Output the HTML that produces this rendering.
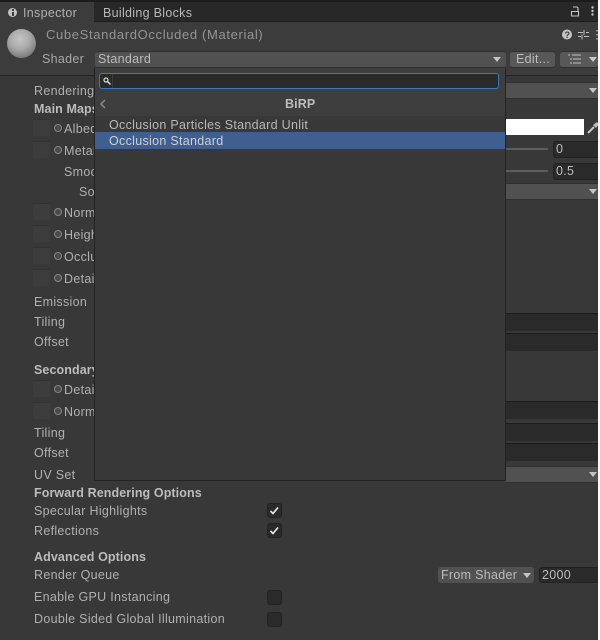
<!DOCTYPE html>
<html><head><meta charset="utf-8"><style>
html,body{margin:0;padding:0;background:#fff}
#r{position:relative;width:598px;height:640px;overflow:hidden;background:#383838;font-family:"Liberation Sans",sans-serif;font-size:12.5px;color:#b0b0b0;letter-spacing:.3px}
#r div{position:absolute;box-sizing:border-box}
.t{white-space:nowrap;line-height:14px;height:14px}
.b{font-weight:bold;color:#bcbcbc;letter-spacing:.1px}
.tx{width:17px;height:17px;background:#3c3c3c;border-top:1px solid #323232;left:33px}
.dot{width:8px;height:8px;border:1.5px solid #858585;border-radius:50%;left:54px;background:#4a4a4a}
.f{left:505px;width:95px;background:#2a2a2a;border-top:1px solid #1c1c1c}
.dd{background:#515151;border-top:1px solid #303030;border-bottom:1px solid #303030}
.ar{width:0;height:0;border-left:4px solid transparent;border-right:4px solid transparent;border-top:5px solid #c4c4c4}
.cb{left:267px;width:15px;height:15px;background:#2a2a2a;border:1px solid #232323;border-radius:3px}
.num{background:#2a2a2a;border:1px solid #212121;border-radius:3px;color:#bcbcbc;padding-left:2px;line-height:15px;height:17px}
</style></head><body><div id="r">
<div style="left:0;top:0;width:600px;height:22px;background:#282828;border-top:2px solid #1c1c1c;border-bottom:1px solid #1d1d1d"></div>
<div style="left:0;top:2px;width:94px;height:20px;background:#3c3c3c"></div>
<div style="left:8px;top:8px;width:9px;height:9px;border-radius:50%;background:#c2c2c2"></div>
<div style="left:11.5px;top:9px;width:2px;height:1.5px;background:#3c3c3c"></div>
<div style="left:11.5px;top:11.5px;width:2px;height:4px;background:#3c3c3c"></div>
<div class="t" style="left:23px;top:6px">Inspector</div>
<div class="t" style="left:103px;top:6px;color:#b8b8b8">Building Blocks</div>
<svg style="position:absolute;left:570px;top:5px" width="26" height="12" viewBox="0 0 26 12"><path d="M1.500 6.500h7v4.500h-7zM3 2h3.500q1.500 0 1.500 1.500V6.500" fill="none" stroke="#c4c4c4" stroke-width="1.100"/><circle cx="22.500" cy="2.500" r="1.200" fill="#c4c4c4"/><circle cx="22.500" cy="6" r="1.200" fill="#c4c4c4"/><circle cx="22.500" cy="9.500" r="1.200" fill="#c4c4c4"/></svg>

<div style="left:0;top:22px;width:600px;height:54px;background:#3c3c3c;border-bottom:1px solid #232323"></div>
<div style="left:7px;top:29px;width:29px;height:29px;border-radius:50%;background:radial-gradient(circle at 45% 35%,#c6c6c6 0,#aaa 40%,#7c7c7c 75%,#4c4c4c 100%)"></div>
<div class="t" style="left:46px;top:28px;font-size:13px;color:#959595;letter-spacing:.65px">CubeStandardOccluded (Material)</div>
<div class="t" style="left:42px;top:52px;color:#a8a8a8">Shader</div>
<div class="dd" style="left:95px;top:51px;width:411px;height:17px;border-radius:3px"></div>
<div class="t" style="left:98px;top:52px;color:#bcbcbc">Standard</div>
<div class="ar" style="left:493px;top:57px"></div>
<div class="dd" style="left:510px;top:51px;width:45px;height:17px;border-radius:3px;background:#585858"></div>
<div class="t" style="left:516px;top:52px;color:#bcbcbc">Edit...</div>
<div class="dd" style="left:560px;top:51px;width:38px;height:17px;border-radius:3px;background:#585858"></div>
<svg style="position:absolute;left:568px;top:54px" width="30" height="10" viewBox="0 0 30 10"><path d="M0 1h2M4 1h9M2 5h2M5 5h8M2 9h2M5 9h8" stroke="#c0c0c0" fill="none"/><path d="M21 3h8l-4 5z" fill="#c8c8c8"/></svg>
<svg style="position:absolute;left:561px;top:28px" width="37" height="13" viewBox="0 0 37 13"><circle cx="6" cy="6.500" r="5" fill="#c4c4c4"/><text x="3.500" y="10" font-family="Liberation Sans" font-size="9" font-weight="bold" fill="#3c3c3c">?</text><path d="M17 4.500h5M25 4.500h3M17 8.500h3M23 8.500h5M23 2v5M21 6.500v5" stroke="#c0c0c0" fill="none"/><path d="M36 2v1.500M36 6v1.500M36 10v1.500" stroke="#aaa" stroke-width="1.500"/></svg>

<div class="t" style="left:34px;top:84px">Rendering Mode</div>
<div class="dd" style="left:505px;top:82px;width:95px;height:17px"></div>
<div class="ar" style="left:589px;top:88px"></div>
<div class="t b" style="left:34px;top:102px">Main Maps</div>

<div class="tx" style="top:119px"></div><div class="dot" style="top:124px"></div><div class="t" style="left:64px;top:122px">Albedo</div>
<div class="tx" style="top:141px"></div><div class="dot" style="top:146px"></div><div class="t" style="left:64px;top:144px">Metallic</div>
<div class="t" style="left:64px;top:165px">Smoothness</div>
<div class="t" style="left:79px;top:185px">Source</div>
<div class="tx" style="top:203px"></div><div class="dot" style="top:208px"></div><div class="t" style="left:64px;top:206px">Normal Map</div>
<div class="tx" style="top:225px"></div><div class="dot" style="top:230px"></div><div class="t" style="left:64px;top:228px">Height Map</div>
<div class="tx" style="top:247px"></div><div class="dot" style="top:252px"></div><div class="t" style="left:64px;top:250px">Occlusion</div>
<div class="tx" style="top:269px"></div><div class="dot" style="top:274px"></div><div class="t" style="left:64px;top:272px">Detail Mask</div>
<div class="t" style="left:34px;top:295px">Emission</div>
<div class="t" style="left:34px;top:315px">Tiling</div>
<div class="t" style="left:34px;top:335px">Offset</div>
<div class="t b" style="left:34px;top:363px">Secondary Maps</div>
<div class="tx" style="top:380px"></div><div class="dot" style="top:385px"></div><div class="t" style="left:64px;top:383px">Detail Albedo</div>
<div class="tx" style="top:402px"></div><div class="dot" style="top:407px"></div><div class="t" style="left:64px;top:405px">Normal Map</div>
<div class="t" style="left:34px;top:426px">Tiling</div>
<div class="t" style="left:34px;top:446px">Offset</div>
<div class="t" style="left:34px;top:468px">UV Set</div>

<div style="left:505px;top:119px;width:79px;height:16px;background:#fff"></div>
<svg style="position:absolute;left:587px;top:120px" width="11" height="14" viewBox="0 0 11 14"><path d="M1 13l6-6" stroke="#c8c8c8" stroke-width="2"/><path d="M6 5l3 3 3-4-2-2z" fill="#bbb"/></svg>
<div style="left:505px;top:148px;width:43px;height:2px;background:#5e5e5e"></div>
<div class="num" style="left:553px;top:141px;width:47px">0</div>
<div style="left:505px;top:170px;width:43px;height:2px;background:#5e5e5e"></div>
<div class="num" style="left:553px;top:163px;width:47px">0.5</div>
<div class="dd" style="left:505px;top:183px;width:95px;height:17px"></div>
<div class="ar" style="left:589px;top:189px"></div>

<div class="f" style="top:313px;height:18px"></div>
<div class="f" style="top:333px;height:18px"></div>
<div class="f" style="top:401px;height:18px"></div>
<div class="f" style="top:423px;height:18px"></div>
<div class="f" style="top:443px;height:18px"></div>
<div class="dd" style="left:505px;top:466px;width:95px;height:17px"></div>
<div class="ar" style="left:589px;top:472px"></div>

<div class="t b" style="left:34px;top:486px">Forward Rendering Options</div>
<div class="t" style="left:34px;top:504px">Specular Highlights</div>
<div class="cb" style="top:503px"></div>
<svg style="position:absolute;left:269px;top:506px" width="11" height="10" viewBox="0 0 11 10"><path d="M1.500 5l2.500 2.500 5-6" fill="none" stroke="#e4e4e4" stroke-width="1.700"/></svg>
<div class="t" style="left:34px;top:524px">Reflections</div>
<div class="cb" style="top:523px"></div>
<svg style="position:absolute;left:269px;top:526px" width="11" height="10" viewBox="0 0 11 10"><path d="M1.500 5l2.500 2.500 5-6" fill="none" stroke="#e4e4e4" stroke-width="1.700"/></svg>
<div class="t b" style="left:34px;top:550px">Advanced Options</div>
<div class="t" style="left:34px;top:568px">Render Queue</div>
<div style="left:438px;top:567px;width:96px;height:16px;border-radius:3px;background:#515151"></div>
<div class="t" style="left:441px;top:568px;color:#bcbcbc">From Shader</div>
<div class="ar" style="left:523px;top:573px"></div>
<div class="num" style="left:539px;top:567px;width:61px;height:16px;line-height:14px">2000</div>
<div class="t" style="left:34px;top:590px">Enable GPU Instancing</div>
<div class="cb" style="top:590px"></div>
<div class="t" style="left:34px;top:612px">Double Sided Global Illumination</div>
<div class="cb" style="top:612px"></div>

<div style="left:94px;top:68px;width:412px;height:413px;background:#383838;border:1px solid #232323;border-top:0"></div>
<div style="left:95px;top:68px;width:410px;height:48px;background:#3e3e3e"></div>
<div style="left:99px;top:73px;width:400px;height:16px;background:#2a2a2a;border:1px solid #3a79bb;border-radius:3px"></div>
<div style="left:112px;top:74px;width:1px;height:14px;background:#3c3c3c"></div>
<svg style="position:absolute;left:103px;top:77px" width="8" height="8" viewBox="0 0 8 8"><circle cx="3" cy="3" r="2" fill="none" stroke="#ddd" stroke-width="1.200"/><path d="M4.500 4.500L7.500 7.500" stroke="#ddd" stroke-width="1.400"/></svg>
<svg style="position:absolute;left:99px;top:99px" width="8" height="10" viewBox="0 0 8 10"><path d="M6 1L2 5l4 4" fill="none" stroke="#8a8a8a" stroke-width="1.500"/></svg>
<div class="t b" style="left:285px;top:97px">BiRP</div>
<div class="t" style="left:109px;top:118px;color:#b8b8b8">Occlusion Particles Standard Unlit</div>
<div style="left:95px;top:132px;width:410px;height:17px;background:#3e5f90"></div>
<div class="t" style="left:109px;top:134px;color:#d0d0d0">Occlusion Standard</div>
</div></body></html>
